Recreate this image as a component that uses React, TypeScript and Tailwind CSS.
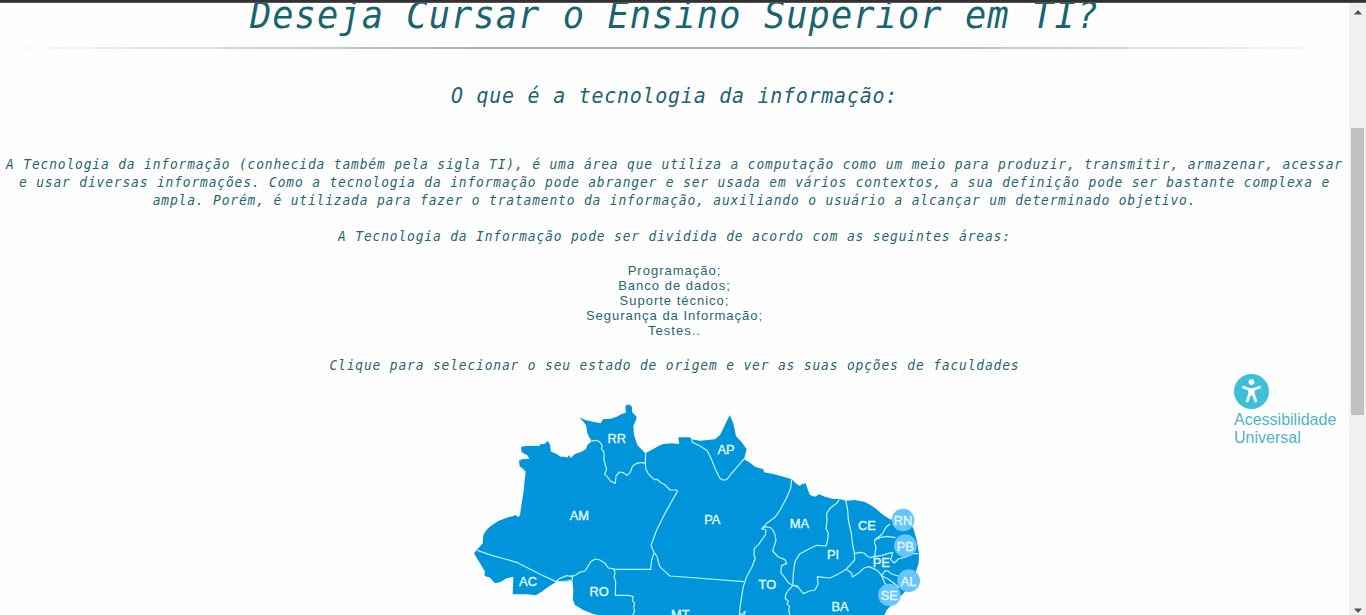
import React from "react";

const silhouette =
  "M12 460L25 445L38 430L40 405L50 389L62 378L85 363L110 353L130 348L137 345L145 352L150 345L155 310L160 280L163 250L167 215L160 207L149 199L147 182L155 178L178 176L172 166L155 157L153 141L165 138L210 137L212 131L222 133L234 123L240 135L243 155L260 162L272 170L285 170L292 173L297 165L302 174L315 162L335 155L348 147L352 135L365 124L358 112L352 100L348 75L340 65L328 52L345 60L370 65L392 70L400 57L420 57L440 50L455 42L468 38L466 20L470 14L480 14L486 22L486 36L500 50L498 60L490 78L492 105L502 135L514 148L526 160L550 147L565 138L580 132L605 130L628 132L625 112L660 112L665 118L690 122L735 118L750 105L765 75L779 45L790 70L798 108L815 127L830 148L822 178L835 185L845 192L855 200L880 208L882 217L910 222L940 230L965 238L980 252L990 258L996 252L1007 250L1013 268L1020 285L1035 290L1047 283L1065 290L1090 297L1108 297L1128 302L1155 300L1185 306L1210 320L1240 345L1260 358L1320 370L1330 385L1340 420L1347 460L1346 490L1338 515L1320 560L1280 600L1250 630L1242 648L398 648L370 642L340 630L315 615L309 600L310 570L307 542L280 545L258 546L235 560L215 575L197 586L170 583L128 583L130 530L110 535L90 547L75 550L60 533L43 527L45 515L30 490Z";

const borders = [
  // AC / AM / RO
  "M22 451L65 466L105 477L140 487L175 505L215 525L258 545L268 536L290 527L307 529L317 525L330 517L345 513L352 503L362 485L375 477L390 480L405 490L415 504L428 506L436 509",
  "M258 545Q285 546 307 540L307 524",
  "M432 508L435 520L432 530L437 545L436 586L475 586L490 590L487 602L494 610L491 622L494 634L488 645",
  "M436 508L542 508L544 485L551 460",
  // RR
  "M365 124Q378 118 389 126L397 137L394 145L402 157L402 180L406 195L410 208L404 223L412 230L421 243L436 250L438 228L448 216L460 218L471 226L480 218L487 200Q502 183 526 190L527 160",
  // AM / PA
  "M526 190L527 205L534 220L545 232L555 239L562 238L570 246L585 255L600 270L621 270L622 274L585 340L560 390L543 436L551 455L561 470L569 500L582 512L600 528L642 531L822 545",
  // AP / PA
  "M666 112L667 127L690 138L712 152L723 175L735 205L749 234L758 240L770 239L783 222L805 197L822 177",
  // PA / MA / TO
  "M965 238L962 265L948 297L930 330L915 352L890 370L875 386L888 390L886 405L875 420L866 433L853 445L852 466L856 475L846 500L830 530L820 560L815 590L810 622L808 648",
  "M875 386L888 380L904 384L914 400L918 420L912 440L908 453L925 471L945 479L950 490L935 497L932 517L942 530L955 548L970 557L985 558",
  // MA / PI
  "M1108 298L1100 310L1080 325L1070 340L1071 365L1068 385L1075 400L1073 420L1068 438L1040 436L1015 448L988 463L975 485L970 520L968 557",
  // PI / BA
  "M970 555L985 562L1000 581L1018 573L1035 570L1044 553L1042 530L1060 532L1080 534L1105 522L1128 508L1142 493L1154 480L1153 458L1148 435L1144 400L1135 360L1133 330L1127 302",
  "M968 557L956 570L947 583L946 596L955 603L951 612L959 619L956 630L960 648",
  // CE
  "M1260 372L1248 382L1237 402L1214 419L1214 430L1218 442L1214 469L1202 473L1190 467L1182 459L1170 457L1153 461",
  "M1214 420L1232 412L1252 409L1277 413",
  // PB / PE
  "M1210 470L1235 467L1253 461L1268 457L1265 469L1262 479L1273 489L1285 477L1310 470L1328 461L1345 461",
  // PE / BA / AL / SE
  "M1128 508L1144 518L1147 531L1165 520L1182 504L1198 500L1215 508L1225 514L1235 527L1245 512L1254 513L1265 522L1290 530",
  "M1235 527L1253 536L1272 550L1288 563M1235 527L1244 549L1256 561",
  "M808 641L822 645L826 634L818 640",
  "M867 539L873 542",
];

const stateLabels = [
  { code: "RR", x: 440, y: 128 },
  { code: "AP", x: 768, y: 161 },
  { code: "AM", x: 328, y: 360 },
  { code: "PA", x: 727, y: 372 },
  { code: "MA", x: 988, y: 384 },
  { code: "CE", x: 1191, y: 390 },
  { code: "PI", x: 1089, y: 476 },
  { code: "PE", x: 1234, y: 501 },
  { code: "AC", x: 174, y: 558 },
  { code: "RO", x: 387, y: 588 },
  { code: "TO", x: 892, y: 567 },
  { code: "BA", x: 1110, y: 633 },
  { code: "MT", x: 631, y: 656 },
];

const coastalStates = [
  { code: "RN", x: 1299, y: 360 },
  { code: "PB", x: 1306, y: 437 },
  { code: "AL", x: 1316, y: 542 },
  { code: "SE", x: 1258, y: 585 },
];

const areas = [
  "Programação;",
  "Banco de dados;",
  "Suporte técnico;",
  "Segurança da Informação;",
  "Testes..",
];

function BrazilMap() {
  return (
    <svg
      className="ml-[470px] block h-[215px] w-[460px] shrink-0 font-['Liberation_Sans',Arial,sans-serif] not-italic tracking-normal"
      viewBox="0 0 1380 645"
    >
      <path d={silhouette} fill="#0095db" strokeLinejoin="round" />
      <g fill="none" stroke="#b9f4fb" strokeWidth="3.6" strokeLinejoin="round">
        {borders.map((d) => (
          <path key={d} d={d} />
        ))}
      </g>
      {coastalStates.map((s) => (
        <circle key={s.code} cx={s.x} cy={s.y} r="34" fill="#66c5fa" />
      ))}
      <g fill="#e9fcff" stroke="#e9fcff" strokeWidth="0.9" fontSize="38.5" textAnchor="middle">
        {stateLabels.map((s) => (
          <text key={s.code} x={s.x} y={s.y}>
            {s.code}
          </text>
        ))}
        {coastalStates.map((s) => (
          <text key={s.code} x={s.x} y={s.y + 15}>
            {s.code}
          </text>
        ))}
      </g>
    </svg>
  );
}

function AccessibilityLink() {
  return (
    <a className="absolute left-[1234px] top-[374px] block font-['Liberation_Sans',Arial,sans-serif] text-base leading-[18px] text-[#4fb4ca]">
      <svg className="mb-[2px] block h-[35px] w-[35px]" viewBox="0 0 35 35">
        <circle cx="17.5" cy="17.5" r="17.5" fill="#3dbfd9" />
        <circle cx="17.5" cy="8.1" r="2.9" fill="#fff" />
        <path
          d="M9.5 13.2L15 15.3H20L25.5 13.2M15.5 20.5L13.2 27M19.5 20.5L21.8 27"
          fill="none"
          stroke="#fff"
          strokeWidth="2.8"
          strokeLinecap="round"
          strokeLinejoin="round"
        />
        <path d="M14 14.5H21L20.4 21.5H14.6Z" fill="#fff" />
      </svg>
      Acessibilidade
      <br />
      Universal
    </a>
  );
}

function Scrollbar() {
  return (
    <div className="flex w-[17px] shrink-0 flex-col items-center bg-[#f0f0f0]">
      <svg className="mt-[6px] h-[6px] w-[8px] shrink-0" viewBox="0 0 8 6">
        <path d="M0 5.5L4 1L8 5.5Z" fill="#505050" />
      </svg>
      <div className="mt-[113px] h-[287px] w-[13px] shrink-0 bg-[#c1c1c1]" />
      <svg className="mt-auto mb-[2px] h-[5px] w-[8px] shrink-0" viewBox="0 0 8 5">
        <path d="M0 0.5L4 5L8 0.5Z" fill="#505050" />
      </svg>
    </div>
  );
}

export default function App() {
  return (
    <div className="relative flex h-[615px] w-[1366px] flex-col overflow-hidden bg-[#fefefe]">
      <div className="h-[3px] shrink-0 border-b border-[#555354] bg-[#333132]" />
      <div className="flex min-h-0 flex-1">
        <main className="flex w-[1349px] shrink-0 flex-col overflow-hidden whitespace-nowrap text-center font-['DejaVu_Sans_Mono','Liberation_Mono',monospace] text-[13.6px] italic leading-[18px] tracking-[0.895px] text-[#1f6670]">
          <h1 className="-mt-[13px] h-[57px] shrink-0 scale-x-[0.93] text-[38px] leading-[50px] tracking-[1.15px] text-[#17656f]">
            Deseja Cursar o Ensino Superior em TI?
          </h1>
          <div className="h-[2px] shrink-0 bg-[linear-gradient(90deg,#ffffff00_0%,#9fb9bd_35%,#9fb9bd_65%,#ffffff00_100%)]" />
          <h2 className="mt-[32px] h-[29px] shrink-0 scale-x-[0.95] text-[21px] leading-[30px] tracking-[0.8px] text-[#1b6470]">
            O que é a tecnologia da informação:
          </h2>
          <p className="-mx-[50px] mt-[45px] shrink-0 scale-x-[0.95]">
            A Tecnologia da informação (conhecida também pela sigla TI), é uma área que utiliza a computação como um meio para produzir, transmitir, armazenar, acessar
            <br />
            e usar diversas informações. Como a tecnologia da informação pode abranger e ser usada em vários contextos, a sua definição pode ser bastante complexa e
            <br />
            ampla. Porém, é utilizada para fazer o tratamento da informação, auxiliando o usuário a alcançar um determinado objetivo.
          </p>
          <p className="mt-[18px] shrink-0 scale-x-[0.95]">
            A Tecnologia da Informação pode ser dividida de acordo com as seguintes áreas:
          </p>
          <ul className="mt-[18px] shrink-0 font-['Liberation_Sans',Arial,sans-serif] text-[13px] not-italic leading-[15px] tracking-[1px]">
            {areas.map((area) => (
              <li key={area}>{area}</li>
            ))}
          </ul>
          <p className="mt-[18px] mb-[26px] shrink-0 scale-x-[0.95]">
            Clique para selecionar o seu estado de origem e ver as suas opções de faculdades
          </p>
          <BrazilMap />
        </main>
        <Scrollbar />
      </div>
      <AccessibilityLink />
    </div>
  );
}
